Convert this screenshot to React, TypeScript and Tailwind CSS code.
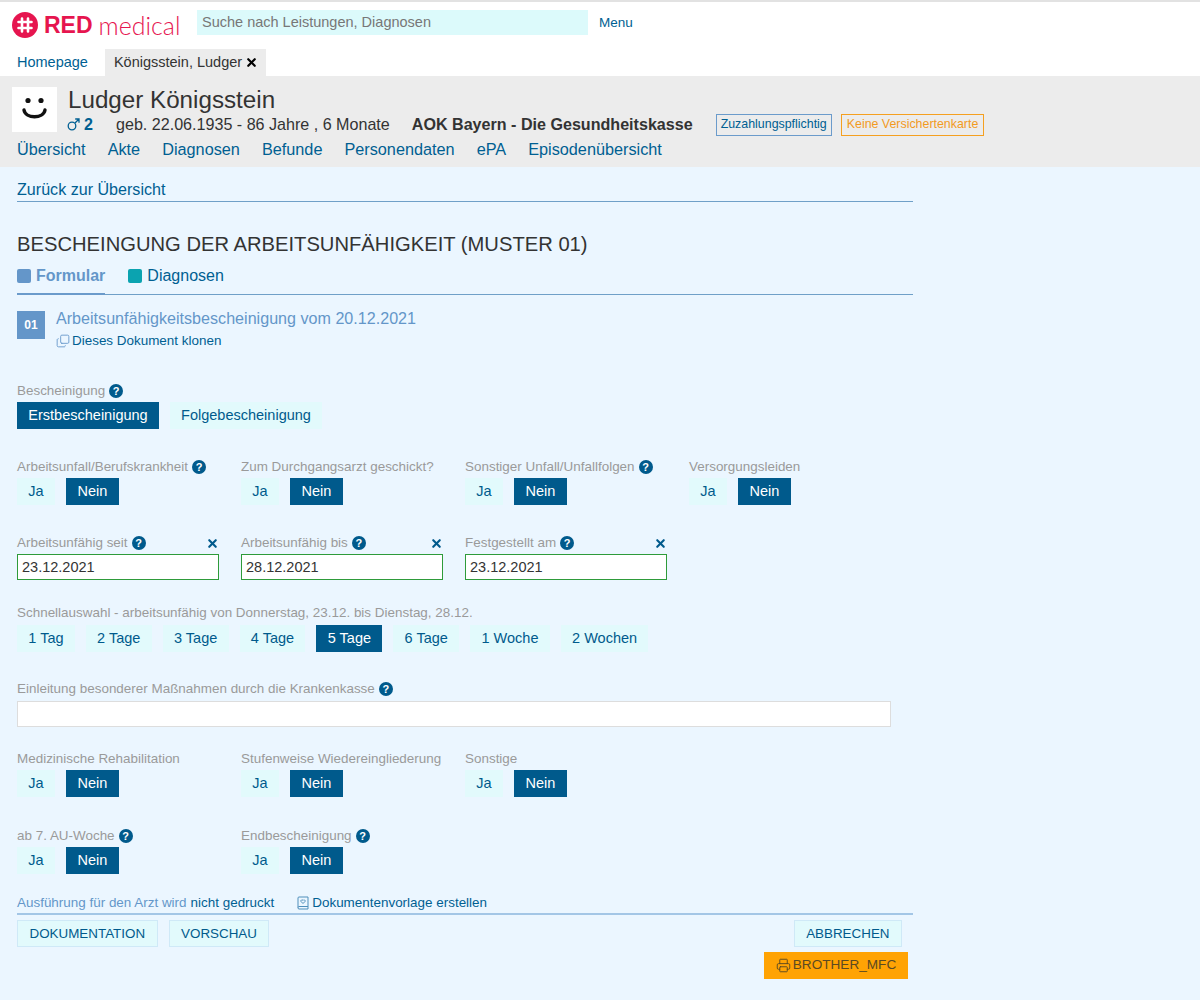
import { Copy, Printer, X } from "lucide-react";

const font = { fontFamily: '"Liberation Sans", Arial, sans-serif' };

function Help() {
  return (
    <span className="ml-[4px] inline-flex h-[14px] w-[14px] items-center justify-center rounded-full bg-[#005a8c] text-[11px] font-bold leading-none text-white">?</span>
  );
}

function Toggle({ label, active, className }: { label: string; active?: boolean; className?: string }) {
  return (
    <span className={`flex h-[27px] items-center justify-center text-[14.5px] ${active ? "bg-[#005a8c] text-white" : "bg-[#e2fafc] text-[#005a8c]"} ${className ?? ""}`}>
      {label}
    </span>
  );
}

function YesNo({ label, help }: { label: string; help?: boolean }) {
  return (
    <div>
      <div className="flex h-[16px] items-center text-[13.45px] text-[#9a9a9a]">
        {label}
        {help && <Help />}
      </div>
      <div className="mt-[3px] flex gap-[11px]">
        <Toggle label="Ja" className="w-[38px]" />
        <Toggle label="Nein" active className="w-[53px]" />
      </div>
    </div>
  );
}

function DateField({ label, value }: { label: string; value: string }) {
  return (
    <div className="w-[202px]">
      <div className="flex h-[16px] items-center justify-between text-[13.45px] text-[#9a9a9a]">
        <span className="flex items-center">
          {label}
          <Help />
        </span>
        <X className="h-[13px] w-[13px] text-[#005a8c]" strokeWidth={4} />
      </div>
      <div className="mt-[3px] flex h-[26px] items-center border border-[#2e9b3a] bg-white px-1 pt-[1px] text-[14.5px] text-[#333]">{value}</div>
    </div>
  );
}

function Logo() {
  return (
    <div className="flex w-[168px] items-center whitespace-nowrap">
      <svg viewBox="0 0 26 26" className="h-[26px] w-[26px] shrink-0">
        <circle cx="13" cy="13" r="13" fill="#e6154f" />
        <path d="M10 6.5v13M16 6.5v13M6.5 10h13M6.5 16h13" stroke="#fff" strokeWidth="2.6" strokeLinecap="round" />
      </svg>
      <span className="ml-[6px] text-[23px] font-bold leading-none text-[#e6154f]">RED</span>
      <span className="ml-[6px] text-[25px] font-light leading-none text-[#e6154f]" style={{ fontFamily: "Lato, sans-serif" }}>medical</span>
    </div>
  );
}

export default function App() {
  const nav = ["Übersicht", "Akte", "Diagnosen", "Befunde", "Personendaten", "ePA", "Episodenübersicht"];
  const days = ["1 Tag", "2 Tage", "3 Tage", "4 Tage", "5 Tage", "6 Tage", "1 Woche", "2 Wochen"];

  return (
    <div className="h-[1000px] w-[1200px] overflow-hidden bg-white" style={font}>
      <div className="h-[2px] bg-[#e2e2e2]" />
      <header className="flex h-[47px] pl-[12px] pt-[8px]">
        <div className="pt-[2px]"><Logo /></div>
        <div className="ml-[17px] flex h-[25px] w-[391px] items-center bg-[#dcfafb] px-[5px] text-[14.5px] text-[#777]">Suche nach Leistungen, Diagnosen</div>
        <a className="ml-[11px] flex h-[25px] items-center pt-[2px] text-[13.5px] text-[#005f92]">Menu</a>
      </header>
      <div className="flex h-[27px] pl-[17px] text-[14.5px]">
        <a className="flex items-center text-[#005f92]">Homepage</a>
        <span className="ml-[17px] flex items-center bg-[#ececec] pl-[9px] pr-[8px] text-[#333]">
          Königsstein, Ludger
          <X className="ml-[3px] h-[13px] w-[13px] text-black" strokeWidth={4} />
        </span>
      </div>

      <section className="h-[91px] bg-[#ececec] pl-[12px] pt-[11px]">
        <div className="flex">
          <div className="flex h-[45px] w-[45px] items-center justify-center bg-white">
            <svg viewBox="0 0 45 45" className="h-[45px] w-[45px]">
              <circle cx="16" cy="13.5" r="2.6" fill="#111" />
              <circle cx="29" cy="13.5" r="2.6" fill="#111" />
              <path d="M12 23c1.5 9 19.5 9 21 0" fill="none" stroke="#111" strokeWidth="3.4" strokeLinecap="round" />
            </svg>
          </div>
          <div className="ml-[11px] -mt-[1px]">
            <div className="text-[24.2px] leading-[27px] text-[#333]">Ludger Königsstein</div>
            <div className="mt-[1px] flex h-[21px] items-center text-[16.1px] text-[#333]">
              <span className="-ml-[1px] flex w-[49px] items-center font-bold text-[#005f92]">
                <svg viewBox="0 0 13 13" className="h-[13px] w-[13px]" fill="none" stroke="#005f92" strokeWidth="1.3">
                  <circle cx="5" cy="8" r="3.8" />
                  <path d="M8 5 12 1M8.2 1H12v3.8" />
                </svg>
                <span className="ml-[4px]">2</span>
              </span>
              <span>geb. 22.06.1935 - 86 Jahre , 6 Monate</span>
              <span className="ml-[22px] font-bold">AOK Bayern - Die Gesundheitskasse</span>
              <span className="ml-[23px] flex h-[22px] items-center border border-[#6b9bcb] px-[4px] text-[12.4px] text-[#005f92]">Zuzahlungspflichtig</span>
              <span className="ml-[9px] flex h-[22px] items-center border border-[#f5a020] px-[5px] text-[12.4px] text-[#f29a1f]">Keine Versichertenkarte</span>
            </div>
          </div>
        </div>
        <nav className="ml-[5px] mt-[4px] flex gap-[22px] text-[16.25px] leading-[20px] text-[#005f92]">
          {nav.map((item) => <a key={item}>{item}</a>)}
        </nav>
      </section>

      <main className="h-[833px] bg-[#ebf6ff] pl-[17px]">
        <div className="w-[896px]">
          <div className="flex h-[35px] items-end border-b border-[#6fa0c8] text-[16.1px] leading-[23px] text-[#005f92]">Zurück zur Übersicht</div>
          <h1 className="mt-[29px] text-[20.2px] leading-[26px] text-[#333]">BESCHEINGUNG DER ARBEITSUNFÄHIGKEIT (MUSTER 01)</h1>
          <div className="mt-[7px] flex h-[31px] items-start border-b border-[#6fa0c8] text-[16px]">
            <span className="flex h-[31px] items-center border-b-2 border-[#6b9bcb] pb-[6px] font-bold text-[#6496c9]">
              <span className="mr-[5px] h-[14px] w-[14px] rounded-[2px] bg-[#6496c9]" />
              Formular
            </span>
            <span className="ml-[23px] flex h-[23px] items-center text-[#005f92]">
              <span className="mr-[5px] h-[14px] w-[14px] rounded-[2px] bg-[#0ba3b0]" />
              Diagnosen
            </span>
          </div>
          <div className="mt-[16px] flex">
            <span className="flex h-[28px] w-[28px] items-center justify-center bg-[#6496c9] text-[12px] font-bold text-white">01</span>
            <div className="ml-[11px]">
              <div className="-mt-[1px] text-[16.13px] leading-[16px] text-[#6496c9]">Arbeitsunfähigkeitsbescheinigung vom 20.12.2021</div>
              <div className="mt-[7px] flex items-center text-[13.45px] leading-[16px] text-[#005f92]">
                <Copy className="mr-[2px] h-[14px] w-[14px] -scale-y-100 text-[#6496c9]" strokeWidth={1.5} />
                Dieses Dokument klonen
              </div>
            </div>
          </div>
        </div>

        <div className="mt-[34px] flex h-[16px] items-center text-[13.45px] text-[#9a9a9a]">Bescheinigung<Help /></div>
        <div className="mt-[3px] flex gap-[11px]">
          <Toggle label="Erstbescheinigung" active className="w-[142px]" />
          <Toggle label="Folgebescheinigung" className="w-[152px]" />
        </div>

        <div className="mt-[30px] grid grid-cols-[repeat(4,224px)]">
          <YesNo label="Arbeitsunfall/Berufskrankheit" help />
          <YesNo label="Zum Durchgangsarzt geschickt?" />
          <YesNo label="Sonstiger Unfall/Unfallfolgen" help />
          <YesNo label="Versorgungsleiden" />
        </div>

        <div className="mt-[30px] grid grid-cols-[repeat(4,224px)]">
          <DateField label="Arbeitsunfähig seit" value="23.12.2021" />
          <DateField label="Arbeitsunfähig bis" value="28.12.2021" />
          <DateField label="Festgestellt am" value="23.12.2021" />
        </div>

        <div className="mt-[25px] flex h-[16px] items-center text-[13.45px] text-[#9a9a9a]">Schnellauswahl - arbeitsunfähig von Donnerstag, 23.12. bis Dienstag, 28.12.</div>
        <div className="mt-[4px] flex gap-[11px]">
          {days.map((d) => <Toggle key={d} label={d} active={d === "5 Tage"} className="px-[11.3px]" />)}
        </div>

        <div className="mt-[29px] flex h-[16px] items-center text-[13.45px] text-[#9a9a9a]">Einleitung besonderer Maßnahmen durch die Krankenkasse<Help /></div>
        <div className="mt-[4px] h-[26px] w-[874px] border border-[#dddddd] bg-white" />

        <div className="mt-[24px] grid grid-cols-[repeat(4,224px)]">
          <YesNo label="Medizinische Rehabilitation" />
          <YesNo label="Stufenweise Wiedereingliederung" />
          <YesNo label="Sonstige" />
        </div>

        <div className="mt-[31px] grid grid-cols-[repeat(4,224px)]">
          <YesNo label="ab 7. AU-Woche" help />
          <YesNo label="Endbescheinigung" help />
        </div>

        <div className="mt-[21px] w-[896px]">
          <div className="flex h-[20px] items-center border-b-2 border-[#a3c6e6] pb-[2px] text-[13.45px]">
            <span className="text-[#6496c9]">Ausführung für den Arzt wird</span>
            <span className="ml-[4px] text-[#005f92]">nicht gedruckt</span>
            <span className="ml-[23px] flex items-center text-[#005f92]">
              <svg viewBox="0 0 12 14" className="mr-[3px] h-[14px] w-[12px]" fill="none" stroke="#4f8fbb" strokeWidth="1">
                <path d="M1 11.5V2a1 1 0 0 1 1-1h9v12H2a1.2 1.2 0 0 1-1-1.5Zm0 0a1.2 1.2 0 0 1 1-1h9" />
                <path d="M6 7.5 4 5.5a1.1 1.1 0 0 1 2-1 1.1 1.1 0 0 1 2 1Z" />
              </svg>
              Dokumentenvorlage erstellen
            </span>
          </div>
          <div className="mt-[5px] flex items-start justify-between text-[13.4px] text-[#005a8c]">
            <div className="flex gap-[11px]">
              <span className="flex h-[27px] items-center border border-[#cfe9f7] bg-[#e2fafc] px-[11.5px] pt-[2px]">DOKUMENTATION</span>
              <span className="flex h-[27px] items-center border border-[#cfe9f7] bg-[#e2fafc] px-[11.5px] pt-[2px]">VORSCHAU</span>
            </div>
            <div className="mr-[5px] flex flex-col items-end">
              <span className="mr-[6px] flex h-[27px] items-center border border-[#cfe9f7] bg-[#e2fafc] px-[11.5px] pt-[2px]">ABBRECHEN</span>
              <span className="mt-[5px] flex h-[27px] w-[144px] items-center justify-center bg-[#ffa304] text-[13.6px] text-[#5c4a22]">
                <Printer className="mr-[2px] h-[15px] w-[15px]" strokeWidth={1.5} />
                BROTHER_MFC
              </span>
            </div>
          </div>
        </div>
      </main>
    </div>
  );
}
